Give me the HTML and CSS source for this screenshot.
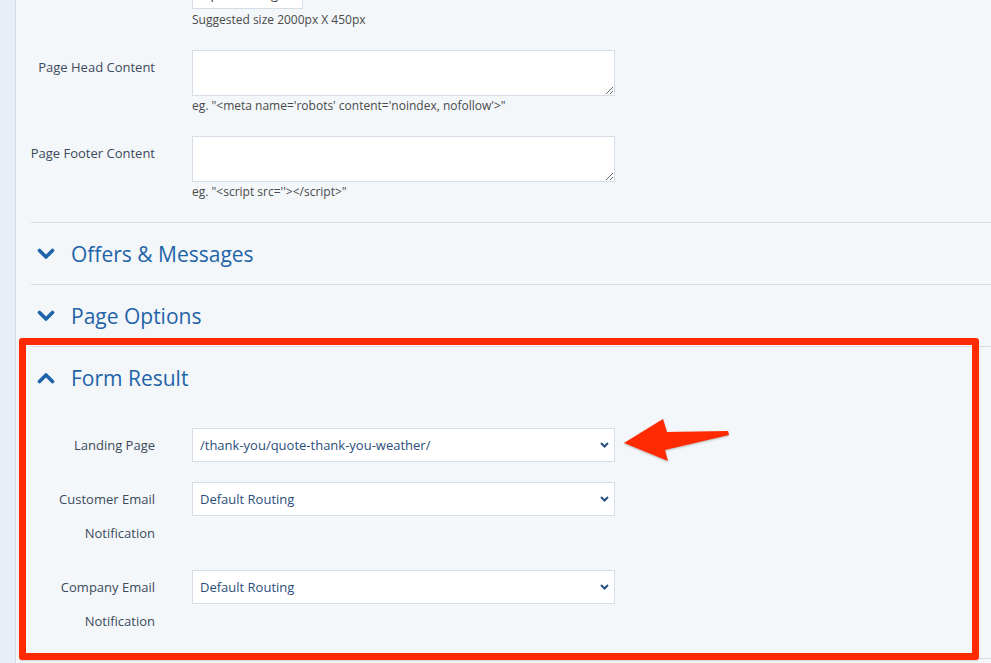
FILE: index.html
```html
<!DOCTYPE html>
<html lang="en">

<head>
    <meta charset="UTF-8">
    <meta name="viewport" content="width=device-width, initial-scale=1.0">
    <title>Page Settings</title>
    <link rel="stylesheet" href="styles.css">
</head>

<body>
    <div class="app">
        <aside class="rail"></aside>

        <main class="panel">
            <div class="field field-first">
                <div class="label"></div>
                <div class="control">
                    <button class="upload">Upload Image</button>
                    <div class="hint">Suggested size 2000px X 450px</div>
                </div>
            </div>

            <div class="field">
                <label class="label" for="head">Page Head Content</label>
                <div class="control">
                    <textarea id="head"></textarea>
                    <div class="hint">eg. "&lt;meta name='robots' content='noindex, nofollow'&gt;"</div>
                </div>
            </div>

            <div class="field">
                <label class="label" for="footer">Page Footer Content</label>
                <div class="control">
                    <textarea id="footer"></textarea>
                    <div class="hint">eg. "&lt;script src=''&gt;&lt;/script&gt;"</div>
                </div>
            </div>

            <section class="group">
                <h2 class="group-title">
                    <svg class="chev" width="18" height="14" viewBox="0 0 18 14"><polyline points="2.5,3.5 9,10 15.5,3.5" /></svg>
                    Offers &amp; Messages
                </h2>
            </section>

            <section class="group">
                <h2 class="group-title">
                    <svg class="chev" width="18" height="14" viewBox="0 0 18 14"><polyline points="2.5,3.5 9,10 15.5,3.5" /></svg>
                    Page Options
                </h2>
            </section>

            <section class="group open">
                <h2 class="group-title">
                    <svg class="chev" width="18" height="14" viewBox="0 0 18 14"><polyline points="2.5,10.5 9,4 15.5,10.5" /></svg>
                    Form Result
                </h2>
                <div class="group-body">
                    <div class="row">
                        <div class="label">Landing Page</div>
                        <div class="select">
                            <span>/thank-you/quote-thank-you-weather/</span>
                            <svg width="9" height="6" viewBox="0 0 9 6"><polyline points="1,1 4.5,4.5 8,1" /></svg>
                        </div>
                    </div>
                    <div class="row">
                        <div class="label">Customer Email<br>Notification</div>
                        <div class="select">
                            <span>Default Routing</span>
                            <svg width="9" height="6" viewBox="0 0 9 6"><polyline points="1,1 4.5,4.5 8,1" /></svg>
                        </div>
                    </div>
                    <div class="row">
                        <div class="label">Company Email<br>Notification</div>
                        <div class="select">
                            <span>Default Routing</span>
                            <svg width="9" height="6" viewBox="0 0 9 6"><polyline points="1,1 4.5,4.5 8,1" /></svg>
                        </div>
                    </div>
                </div>
            </section>
            <section class="group"></section>
        </main>

        <!-- annotation drawn on top of the screenshot -->
        <div class="callout"></div>
        <svg class="arrow" width="120" height="60" viewBox="0 0 120 60">
            <polygon points="4,33 43,9 47,22 108,21 109,25 45,40 48,51" />
        </svg>
    </div>
</body>
</html>
```

FILE: styles.css
```css
body {
    margin: 0;
    font-family: "Open Sans", "Noto Sans", sans-serif;
    background: #f3f7fa;
    overflow: hidden;
}

.app {
    display: flex;
    position: relative;
    min-height: 663px;
}

.rail {
    width: 15px;
    flex: none;
    background: #e6edf5;
    border-right: 1px solid #d3dbe5;
}

.panel {
    flex: 1;
    padding-left: 15px;
    background: #f3f7fa;
}

.field,
.row {
    display: grid;
    grid-template-columns: 130px 423px;
    column-gap: 37px;
    margin-left: -6px;
    margin-bottom: 22px;
}

.field-first {
    margin-top: -21px;
}

.label {
    text-align: right;
    white-space: nowrap;
    font-size: 13px;
    line-height: 34px;
    color: #3b4a5c;
}

.control {
    display: flex;
    flex-direction: column;
    align-items: flex-start;
}

.upload {
    width: 111px;
    height: 30px;
    padding: 0 8px;
    text-align: left;
    background: #fff;
    border: 1px solid #d5dde6;
    font-family: inherit;
    font-size: 13px;
    color: #333;
}

.control textarea {
    display: block;
    box-sizing: border-box;
    width: 423px;
    height: 46px;
    margin: 0;
    border: 1px solid #d5dde6;
    background: #fff;
}

.hint {
    margin-top: 2px;
    font-size: 12px;
    line-height: 16px;
    color: #4a4a4a;
}

.field-first .hint {
    margin-top: 3px;
}

.group {
    border-top: 1px solid #dcdcdc;
}

.group-title {
    display: flex;
    align-items: center;
    gap: 16px;
    height: 61px;
    margin: 0;
    padding-left: 6px;
    font-size: 21px;
    font-weight: 400;
    color: #1f63a8;
}

.chev polyline {
    fill: none;
    stroke: #1f63a8;
    stroke-width: 3.6;
    stroke-linecap: round;
    stroke-linejoin: round;
}

.group-body {
    padding-top: 20px;
}

.row {
    margin-bottom: 20px;
}

.select {
    box-sizing: border-box;
    height: 34px;
    display: flex;
    align-items: center;
    justify-content: space-between;
    padding: 0 5px 0 7px;
    background: #fff;
    border: 1px solid #d5dde6;
    font-size: 13px;
    color: #2b4e7c;
    align-self: start;
}

.select polyline {
    fill: none;
    stroke: #2b4e7c;
    stroke-width: 2;
}

.callout {
    position: absolute;
    left: 19px;
    top: 338px;
    width: 946px;
    height: 308px;
    border: 7px solid #ff2a00;
    border-radius: 3px;
    box-shadow: 0 1px 2px rgba(0, 0, 0, 0.15);
}

.arrow {
    position: absolute;
    left: 620px;
    top: 410px;
    filter: drop-shadow(0 1px 1px rgba(0, 0, 0, 0.25));
}

.arrow polygon {
    fill: #ff2a00;
}
```
